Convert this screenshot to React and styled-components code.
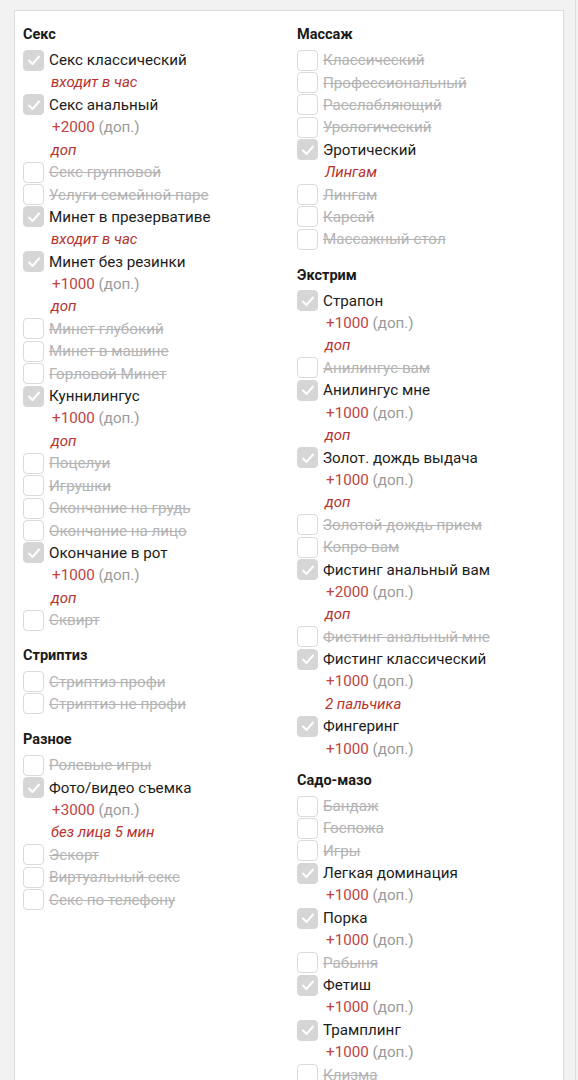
import React from 'react';
import styled, { createGlobalStyle } from 'styled-components';

// data
const left = [
    {
        title: 'Секс',
        items: [
            { name: 'Секс классический', on: true, note: 'входит в час' },
            { name: 'Секс анальный', on: true, price: 2000, note: 'доп' },
            { name: 'Секс групповой' },
            { name: 'Услуги семейной паре' },
            { name: 'Минет в презервативе', on: true, note: 'входит в час' },
            { name: 'Минет без резинки', on: true, price: 1000, note: 'доп' },
            { name: 'Минет глубокий' },
            { name: 'Минет в машине' },
            { name: 'Горловой Минет' },
            { name: 'Куннилингус', on: true, price: 1000, note: 'доп' },
            { name: 'Поцелуи' },
            { name: 'Игрушки' },
            { name: 'Окончание на грудь' },
            { name: 'Окончание на лицо' },
            { name: 'Окончание в рот', on: true, price: 1000, note: 'доп' },
            { name: 'Сквирт' },
        ],
    },
    {
        title: 'Стриптиз',
        items: [{ name: 'Стриптиз профи' }, { name: 'Стриптиз не профи' }],
    },
    {
        title: 'Разное',
        items: [
            { name: 'Ролевые игры' },
            { name: 'Фото/видео съемка', on: true, price: 3000, note: 'без лица 5 мин' },
            { name: 'Эскорт' },
            { name: 'Виртуальный секс' },
            { name: 'Секс по телефону' },
        ],
    },
];

const right = [
    {
        title: 'Массаж',
        items: [
            { name: 'Классический' },
            { name: 'Профессиональный' },
            { name: 'Расслабляющий' },
            { name: 'Урологический' },
            { name: 'Эротический', on: true, note: 'Лингам' },
            { name: 'Лингам' },
            { name: 'Карсай' },
            { name: 'Массажный стол' },
        ],
    },
    {
        title: 'Экстрим',
        items: [
            { name: 'Страпон', on: true, price: 1000, note: 'доп' },
            { name: 'Анилингус вам' },
            { name: 'Анилингус мне', on: true, price: 1000, note: 'доп' },
            { name: 'Золот. дождь выдача', on: true, price: 1000, note: 'доп' },
            { name: 'Золотой дождь прием' },
            { name: 'Копро вам' },
            { name: 'Фистинг анальный вам', on: true, price: 2000, note: 'доп' },
            { name: 'Фистинг анальный мне' },
            { name: 'Фистинг классический', on: true, price: 1000, note: '2 пальчика' },
            { name: 'Фингеринг', on: true, price: 1000 },
        ],
    },
    {
        title: 'Садо-мазо',
        items: [
            { name: 'Бандаж' },
            { name: 'Госпожа' },
            { name: 'Игры' },
            { name: 'Легкая доминация', on: true, price: 1000 },
            { name: 'Порка', on: true, price: 1000 },
            { name: 'Рабыня' },
            { name: 'Фетиш', on: true, price: 1000 },
            { name: 'Трамплинг', on: true, price: 1000 },
            { name: 'Клизма' },
        ],
    },
];

function Service ({ item }) {
    return (
        <ServiceItem>
            <Row>
                <Box $on={item.on}>
                    {item.on && (
                        <svg width="14" height="14" viewBox="0 0 14 14">
                            <polyline points="2,7.5 5.5,11 12,3.5" fill="none" stroke="#fff" strokeWidth="2" strokeLinecap="round" strokeLinejoin="round" />
                        </svg>
                    )}
                </Box>
                <Label $on={item.on}>{item.name}</Label>
            </Row>
            {item.price && (
                <Price>
                    +{item.price} <span>(доп.)</span>
                </Price>
            )}
            {item.note && <Note>{item.note}</Note>}
        </ServiceItem>
    );
}

function Column ({ groups }) {
    return (
        <StyledColumn>
            {groups.map((group, key) => (
                <Group key={key}>
                    <Title>{group.title}</Title>
                    {group.items.map((item, i) => (
                        <Service item={item} key={i} />
                    ))}
                </Group>
            ))}
        </StyledColumn>
    );
}

export default function App () {
    return (
        <Page>
            <GlobalStyle />
            <Panel>
                <Column groups={left} />
                <Column groups={right} />
            </Panel>
        </Page>
    );
}

const GlobalStyle = createGlobalStyle`
    body {
        margin: 0;
        background: #f2f2f2;
        font-family: Roboto, "Liberation Sans", sans-serif;
    }
`;

const Page = styled.div`
    width: 576px;
    min-height: 1080px;
    padding: 10px 0 0 14px;
    box-sizing: border-box;
    border-right: 1px solid #dcdcdc;
`;

const Panel = styled.div`
    width: 550px;
    box-sizing: border-box;
    background: #fff;
    border: 1px solid #dcdcdc;
    border-bottom: none;
    padding: 14px 0 0 8px;
    display: grid;
    grid-template-columns: 274px 1fr;
`;

const StyledColumn = styled.div`
    display: flex;
    flex-direction: column;
`;

const Title = styled.div`
    font-size: 14.5px;
    font-weight: bold;
    line-height: 20px;
    color: #1a1a1a;
    margin-bottom: 4px;
`;

const ServiceItem = styled.div`
    display: flex;
    flex-direction: column;
`;

const Row = styled.div`
    display: flex;
    align-items: center;
    height: 22.4px;
`;

const Box = styled.div`
    width: 21px;
    height: 21px;
    box-sizing: border-box;
    border-radius: 4px;
    margin-right: 5px;
    flex-shrink: 0;
    display: flex;
    align-items: center;
    justify-content: center;
    background: ${(p) => (p.$on ? '#d6d6d6' : '#fff')};
    border: 1px solid ${(p) => (p.$on ? '#d6d6d6' : '#dadada')};
`;

const Label = styled.span`
    font-size: 15.2px;
    line-height: 22px;
    white-space: nowrap;
    color: ${(p) => (p.$on ? '#1c1c1c' : '#b4b4b4')};
    text-decoration: ${(p) => (p.$on ? 'none' : 'line-through')};
`;

const Price = styled.div`
    padding-left: 29px;
    font-size: 15.2px;
    line-height: 22.4px;
    color: #c0433f;
    span {
        color: #9a9a9a;
    }
`;

const Note = styled.div`
    padding-left: 28px;
    font-size: 15px;
    font-style: italic;
    line-height: 22.4px;
    color: #b8322c;
`;

const Group = styled.div`
    display: flex;
    flex-direction: column;
    & + & {
        margin-top: 15px;
    }
    ${ServiceItem}:last-child > ${Price}:last-child {
        margin-bottom: -4px;
    }
`;
